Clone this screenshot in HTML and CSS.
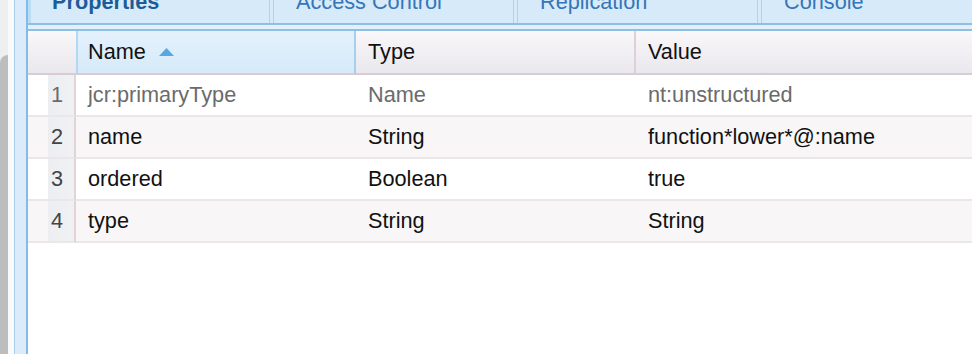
FILE: index.html
```html
<!DOCTYPE html>
<html lang="en">
  <head>
    <meta charset="UTF-8" />
    <meta name="viewport" content="width=device-width, initial-scale=1.0" />
    <title>Properties</title>
    <link rel="stylesheet" href="styles.css">
  </head>
  <body>
    <div class="gutter"><div class="gutter-bar"></div></div>
    <div class="spacer"></div>
    <div class="rail"></div>
    <div class="panel">
      <ul class="tabs">
        <li class="tab active">Properties</li>
        <li class="tab">Access Control</li>
        <li class="tab">Replication</li>
        <li class="tab">Console</li>
      </ul>
      <div class="tab-gap"></div>
      <table class="props">
        <colgroup>
          <col class="col-num" />
          <col class="col-name" />
          <col class="col-type" />
          <col />
        </colgroup>
        <thead>
          <tr>
            <th class="num"></th>
            <th class="sorted">Name
              <svg class="sort" width="15" height="8" viewBox="0 0 15 8"><polygon points="7.5,0 15,8 0,8" fill="#5aa6de" /></svg>
            </th>
            <th class="split">Type</th>
            <th>Value</th>
          </tr>
        </thead>
        <tbody>
          <tr class="protected">
            <td class="num">1</td>
            <td>jcr:primaryType</td>
            <td>Name</td>
            <td>nt:unstructured</td>
          </tr>
          <tr class="alt">
            <td class="num">2</td>
            <td>name</td>
            <td>String</td>
            <td>function*lower*@:name</td>
          </tr>
          <tr>
            <td class="num">3</td>
            <td>ordered</td>
            <td>Boolean</td>
            <td>true</td>
          </tr>
          <tr class="alt">
            <td class="num">4</td>
            <td>type</td>
            <td>String</td>
            <td>String</td>
          </tr>
        </tbody>
      </table>
    </div>
  </body>
</html>
```

FILE: styles.css
```css
html,
body {
  margin: 0;
  height: 100%;
}
body {
  display: flex;
  font-family: "Liberation Sans", Arial, sans-serif;
  font-size: 21.7px;
  background: #fff;
  overflow: hidden;
}
.gutter {
  width: 8px;
  background: #efefef;
  display: flex;
  flex-direction: column;
}
.gutter-bar {
  margin-top: 55px;
  flex: 1;
  background: #bdbdbd;
  border-top-left-radius: 8px;
}
.spacer {
  width: 6px;
  background: #fafafa;
}
.rail {
  width: 11px;
  background: #dcebfa;
  border-left: 1px solid #a9d0ef;
  border-right: 2px solid #82bce6;
}
.panel {
  flex: 1;
  min-width: 0;
}
.tabs {
  display: flex;
  gap: 3px;
  margin: 0;
  padding: 0;
  list-style: none;
  height: 23px;
  background: #d7eaf9;
  border-bottom: 2px solid #8dc0e2;
}
.tab {
  width: 217px;
  height: 23px;
  padding-left: 22px;
  line-height: 3px;
  overflow: hidden;
  white-space: nowrap;
  color: #3576b8;
  border-left: 1px solid #acd3ef;
  border-right: 1px solid #acd3ef;
}
.tab.active {
  width: 217px;
  padding-left: 21px;
  border-left: 3px solid #b9ddf4;
  color: #1d5c9a;
  font-weight: bold;
}
.tab:last-child {
  flex: 1;
  border-right: none;
}
.tab-gap {
  height: 4px;
  background: #e3f0fb;
  border-bottom: 2px solid #8dc0e2;
}
.props {
  width: 100%;
  table-layout: fixed;
  border-collapse: separate;
  border-spacing: 0;
}
.col-num {
  width: 48px;
}
.col-name,
.col-type {
  width: 280px;
}
.props th {
  height: 42px;
  padding: 0 0 0 12px;
  text-align: left;
  font-weight: normal;
  color: #111;
  background: linear-gradient(#faf8f9, #f4f2f4 30%, #e9e8ee);
  border-bottom: 2px solid #d9ccd1;
}
.props th.sorted {
  padding-left: 10px;
  background: linear-gradient(#e4f1fc, #d6eaf9);
  border-left: 2px solid #b4d8f2;
  border-right: 2px solid #a6cfee;
}
.props th.split {
  border-right: 2px solid #ddd1d5;
}
.sort {
  margin-left: 7px;
  vertical-align: 3px;
}
.props td {
  height: 40px;
  padding: 0 0 0 12px;
  white-space: nowrap;
  overflow: hidden;
  color: #111;
  border-bottom: 2px solid #ebe7e9;
}
.props td.num {
  padding: 0 11px 0 0;
  text-align: right;
  color: #444;
  background: linear-gradient(to right, transparent 20px, #eceef1 20px, #f0f1f3);
  border-right: 2px solid #e2d3d7;
}
.props tr.alt td {
  background-color: #f8f6f7;
}
.props tr.protected td {
  color: #6b6b6b;
}
```
